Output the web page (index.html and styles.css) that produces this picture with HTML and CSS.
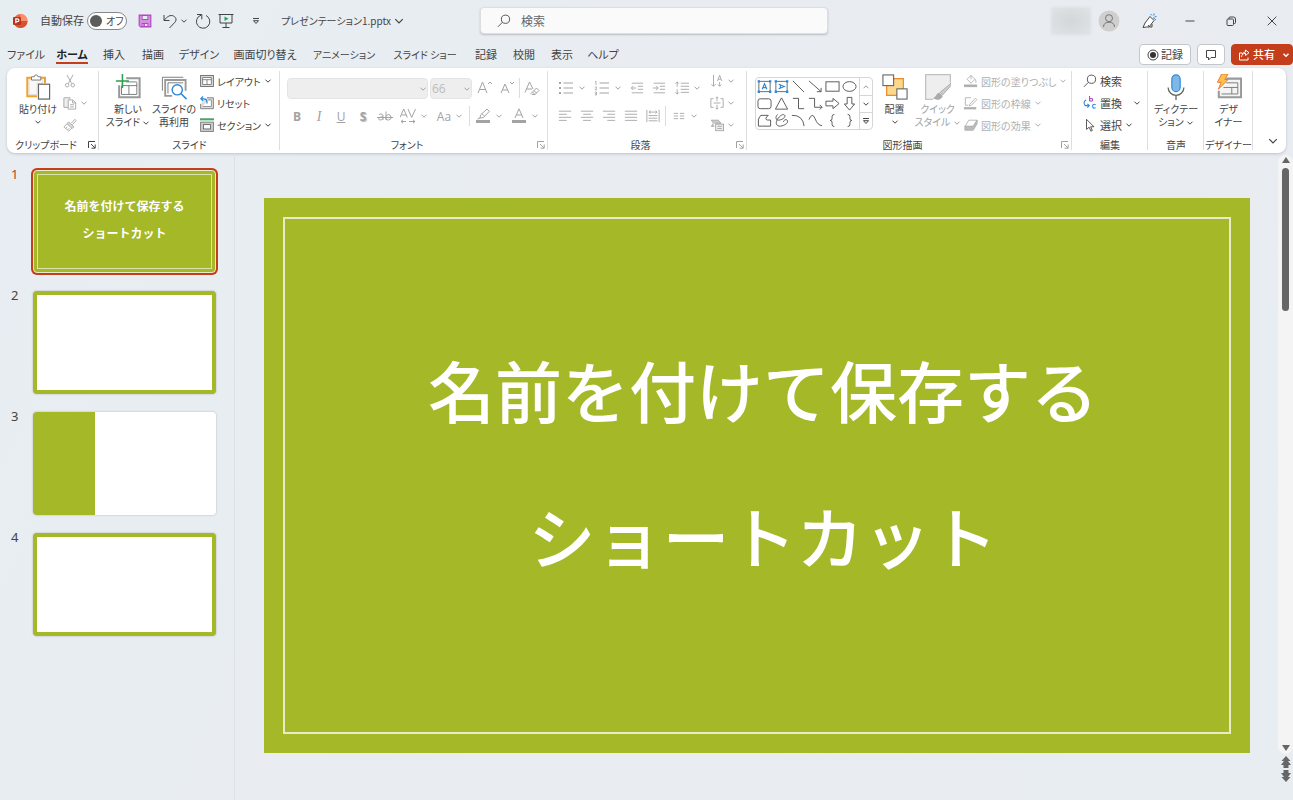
FILE: index.html
```html
<!DOCTYPE html>
<html lang="ja">
<head>
<meta charset="utf-8">
<title>プレゼンテーション1.pptx</title>
<link rel="stylesheet" href="styles.css">
</head>
<body>
<svg class="sprite" aria-hidden="true">
  <symbol id="chev" viewBox="0 0 8 8"><path d="M1.5 2.7 4 5.2 6.5 2.7"/></symbol>
  <symbol id="launch" viewBox="0 0 8 8"><path d="M.5 7V.5H7M3 3l4 4M7.2 3.5v3.7H3.5"/></symbol>
  <symbol id="logo" viewBox="0 0 16 16"><circle cx="8.500" cy="8" r="7" fill="#ed6c47" stroke="none"/><path d="M8.500 1a7 7 0 0 1 7 7h-7z" fill="#ff8f6b" stroke="none"/><path d="M1.500 8h14a7 7 0 0 1-14 0z" fill="#d35230" stroke="none"/><rect x="1" y="4" width="8" height="8" rx="1" fill="#b7351a" stroke="none"/><path d="M3.800 10.200V5.800h1.700a1.400 1.400 0 0 1 0 2.800H3.800" stroke="#fff" stroke-width="1.200"/></symbol>
  <symbol id="save" viewBox="0 0 16 16"><path d="M1.500 1.500h13v13H3l-1.500-1.500zM4.500 1.500v5h7v-5M4.500 14.500v-4h7v4M7 11v3" stroke="#b146c2" stroke-width="1.600"/><path d="M2 2h2v12H2zM12 2h2v12h-2zM4 7h8v3H4z" fill="#d58fe0" stroke="none"/></symbol>
  <symbol id="undo" viewBox="0 0 16 16"><path d="M2 2v5.500h5.500M2.300 7.200C5 3.500 8.500 1.500 11.500 3s3.300 4.500 1 6.700L7.500 15"/></symbol>
  <symbol id="redo" viewBox="0 0 16 16"><path d="M2 1.500h4.800v4.800M6 2.200a6.700 6.700 0 1 0 5 .3"/></symbol>
  <symbol id="present" viewBox="0 0 16 16"><path d="M.5 1.500h15M2 1.500v8.500h12V1.500M8 10v4.500M4.500 14.500h7"/><path d="m6.500 3.500 4 2.300-4 2.300z" fill="#21a366" stroke="none"/></symbol>
  <symbol id="overflow" viewBox="0 0 8 8"><path d="M1 1.500h6M1.500 3.700h5L4 6.500z"/></symbol>
  <symbol id="search" viewBox="0 0 16 16"><circle cx="9.700" cy="6" r="4.700"/><path d="M6.300 9.400 1 14.700"/></symbol>
  <symbol id="user" viewBox="0 0 22 22"><circle cx="11" cy="11" r="10.500" fill="#cfcfcf" stroke="none"/><circle cx="11" cy="8.200" r="3.500"/><path d="M5.500 17c0-3.300 2.300-4.800 5.500-4.800s5.500 1.500 5.500 4.800"/></symbol>
  <symbol id="pen" viewBox="0 0 16 16"><path d="M9 3.500 13 7.500 8 14H5.500L2 14.500 4 10z" fill="#fff" stroke="#444"/><path d="M7 12 8.500 14H11L11 11" stroke="#444"/><path d="M9.500 1 11 2.500M13 .5v2M15.500 3.500l-2 .5M12 4.500l3 2.500" stroke="#2b88d8"/></symbol>
  <symbol id="min" viewBox="0 0 10 10"><path d="M.5 5h9"/></symbol>
  <symbol id="restore" viewBox="0 0 10 10"><rect x="1" y="3" width="6.500" height="6.500" rx="1"/><path d="M3 3V2q0-1 1-1h3.500q2 0 2 2v3.500q0 1-1 1H7.500"/></symbol>
  <symbol id="close" viewBox="0 0 10 10"><path d="m.7.7 8.600 8.600M9.300.7.7 9.300"/></symbol>
  <symbol id="rec" viewBox="0 0 12 12"><circle cx="6" cy="6" r="5"/><circle cx="6" cy="6" r="3" fill="#333" stroke="none"/></symbol>
  <symbol id="comment" viewBox="0 0 12 12"><path d="M1.500 1.500h9v7H6L3.500 11V8.500h-2z"/></symbol>
  <symbol id="share" viewBox="0 0 12 12"><path d="M4 4H1.500v7h8.500V8.500M3.500 8c.3-2.500 1.500-3.700 4-3.700V6.500L11 3.700 7.500 1v2Q5 3 4 5"/></symbol>
  <symbol id="paste" viewBox="0 0 28 28"><path d="M7 4H2.500v20H13" stroke="#f0a030" stroke-width="2.200"/><path d="M17 4h4.500v6" stroke="#f0a030" stroke-width="2.200"/><path d="M4.500 6v16H13V10h6V6z" fill="#f8f8f8" stroke="#ddd"/><path d="M7 6.500V3h3a2 2 0 0 1 4 0h3v3.500z" fill="#fff" stroke="#777"/><rect x="14.500" y="11" width="12" height="16" fill="#fff" stroke="#666" stroke-width="1.300"/></symbol>
  <symbol id="cut" viewBox="0 0 16 16"><path d="M4.500 1 10 11M11.500 1 6 11"/><circle cx="4.800" cy="12.800" r="2"/><circle cx="11.200" cy="12.800" r="2"/></symbol>
  <symbol id="copy" viewBox="0 0 16 16"><path d="M6 13H1V2h7v2" fill="#eee"/><path d="M6 4.500h5l3.500 3V15H6z" fill="#fff"/><path d="M11 4.500V8h3.500M8 10h4.500M8 12.500h4.500"/></symbol>
  <symbol id="brush" viewBox="0 0 16 16"><path d="m9.500 6 4-4.500 1.500 1.500-4 4.500"/><path d="m6.500 4.500 6 5.500-2 2-6-5.500z" fill="#ddd"/><path d="M4.500 7 1 10l5.500 5 3.500-3.200M3 12l2-2M5 13.700l2-2"/></symbol>
  <symbol id="newslide" viewBox="0 0 28 28"><path d="M12 4.500h14.500V25h-22V12" stroke-width="2.200" stroke="#999"/><path d="M12 8.500h11.500M7 13v9h16.500v-13M7 12.500h17M15 12.500v9.500" stroke="#777"/><path d="M8 0v15M1 7.500h14" stroke="#2f9e52" stroke-width="1.700"/></symbol>
  <symbol id="reuse" viewBox="0 0 28 28"><path d="M1.500 18V3.500H24" stroke="#777"/><path d="M12 23.500H4.500v-17h22V18" stroke-width="2" stroke="#999"/><path d="M7.500 21V9.500H24" stroke="#777"/><circle cx="17.500" cy="17" r="5.500" fill="#fff" stroke="#2b88d8" stroke-width="1.500"/><path d="m21.500 21 6 6" stroke="#2b88d8" stroke-width="1.700"/></symbol>
  <symbol id="layout" viewBox="0 0 16 16"><rect x=".7" y="1.700" width="14.600" height="12.600" fill="#ddd" stroke="#666"/><path d="M3 4h10v8H3zM3 6.500h10M8 6.500V12" fill="#fff" stroke="#777"/></symbol>
  <symbol id="reset" viewBox="0 0 16 16"><path d="M8 2h7.300v12.500H.7V9" fill="#ddd" stroke="#777"/><path d="M9 4.500h4V12H3" fill="#fff" stroke="#888"/><path d="M3.500.5 1 3.200l2.700 2.500M1 3.200h3.500Q8 3.500 8 7v1.500" stroke="#2b88d8" stroke-width="1.400"/></symbol>
  <symbol id="section" viewBox="0 0 16 16"><path d="M0 1.500h16" stroke="#4aa564" stroke-width="2.400"/><rect x=".7" y="4.700" width="14.600" height="10.600" fill="#ccc" stroke="#777"/><rect x="4" y="7.500" width="8" height="5" fill="#fff" stroke="#666"/></symbol>
  <symbol id="grow" viewBox="0 0 16 16"><path d="M1 13 5.500 2 10 13M2.700 9.500h5.600M11 4l2-2 2 2"/></symbol>
  <symbol id="shrink" viewBox="0 0 16 16"><path d="M2 13 6 4l4 9M3.500 10h5M11 2l2 2 2-2"/></symbol>
  <symbol id="clear" viewBox="0 0 16 16"><path d="M1 12.500 5.500 2 9 9M2.500 9H8M12.500 8l2.500 2.500-4 4-2.500-2.500zM10 10.500l2.500 2.500M8.500 12l-1.500 1.500 1 1h3"/></symbol>
  <symbol id="strike" viewBox="0 0 16 16"><path d="M0 9.500h16M2 6.500q4-1.500 4 1.500v4M6 9c-5-.5-5 3-3 3q2 0 3-1.500M9 3.500V12M9 8.500q1-2 2.700-2T14 9t-2.500 3T9 10"/></symbol>
  <symbol id="kern" viewBox="0 0 16 16"><path d="M0 9.500 3.700 1l3.700 8.500M1.500 7h4.500M8 1l3.700 8.500L15.500 1M1 13.500h5M3 11.800 1 13.500l2 1.700M9 13.500h6M13 11.800l2 1.700-2 1.700"/></symbol>
  <symbol id="marker" viewBox="0 0 16 16"><path d="m5.500 7 6.500-6 2.300 2.300L8.500 9.500 5 10zM5 10 2.500 11M7 5.700l2.700 2.700"/><path d="M1 13.500h14" stroke-width="3"/></symbol>
  <symbol id="fcolor" viewBox="0 0 16 16"><path d="M4 10 8 .8 12 10M5.500 7h5"/><path d="M1 13.500h14" stroke-width="3"/></symbol>
  <symbol id="bullets" viewBox="0 0 16 16"><path d="M1 3h2M1 8h2M1 13h2" stroke-width="2"/><path d="M5.500 3H15M5.500 8H15M5.500 13H15"/></symbol>
  <symbol id="numbers" viewBox="0 0 16 16"><path d="M1 2l1-.7V5M.8 7h1.700v1L1 9.700h2M.8 12h1.700v3H.8M1 13.500h1.500" stroke-width=".8"/><path d="M5.500 3H15M5.500 8H15M5.500 13H15"/></symbol>
  <symbol id="outdent" viewBox="0 0 16 16"><path d="M2 2.500h13M9 6h6M9 9.500h6M2 13.500h13M7 8H1.500M4 5.500 1.500 8 4 10.500"/></symbol>
  <symbol id="indent" viewBox="0 0 16 16"><path d="M2 2.500h13M9 6h6M9 9.500h6M2 13.500h13M1 8h6M4.500 5.500 7 8l-2.500 2.500"/></symbol>
  <symbol id="spacing" viewBox="0 0 16 16"><path d="M2.500 1v5.500M.5 3l2-2 2 2M2.500 15V9.500M.5 13l2 2 2-2M6.500 2.500H16M6.500 6H16M6.500 9.500H16M6.500 13H16"/></symbol>
  <symbol id="left" viewBox="0 0 16 16"><path d="M1 2.500h14M1 6h9M1 9.500h14M1 13h9"/></symbol>
  <symbol id="center" viewBox="0 0 16 16"><path d="M1 2.500h14M3.500 6h9M1 9.500h14M3.500 13h9"/></symbol>
  <symbol id="right" viewBox="0 0 16 16"><path d="M1 2.500h14M6 6h9M1 9.500h14M6 13h9"/></symbol>
  <symbol id="justify" viewBox="0 0 16 16"><path d="M1 2.500h14M1 6h14M1 9.500h14M1 13h14"/></symbol>
  <symbol id="distribute" viewBox="0 0 16 16"><path d="M1 1v14M15 1v14M3.500 3.500h9M5 1.700 3.500 3.500 5 5.300M11 1.700l1.500 1.800L11 5.300M3 7.500h10M3 10.500h10M3 13.500h10"/></symbol>
  <symbol id="columns" viewBox="0 0 16 16"><path d="M2 5h5M2 8h5M2 11h5M9 5h5M9 8h5M9 11h5"/></symbol>
  <symbol id="direction" viewBox="0 0 16 16"><path d="M4 1v13M1.500 11.500 4 14l2.500-2.500M8.500 8l2.500-6.500L13.500 8M9.500 6h3M11 9v5M9 12l2 2 2-2"/></symbol>
  <symbol id="valign" viewBox="0 0 16 16"><path d="M4 3H1v10h3M12 3h3v10h-3M4 8h8M8 1v5M6.500 2.500 8 1l1.500 1.500M8 15v-5M6.500 13.500 8 15l1.500-1.500"/></symbol>
  <symbol id="smartart" viewBox="0 0 16 16"><path d="M1.500 2.500h8L12.500 6H5M1.500 2.500 4 6 1.500 9.500H5" fill="#ccc"/><rect x="6.500" y="7" width="9" height="7.500" fill="#eee"/><path d="M8.500 9.500h5M8.500 12h5"/></symbol>
  <symbol id="textbox" viewBox="0 0 16 16"><rect x="2" y="2.500" width="12" height="11" stroke="#666"/><path d="M.7 1.200h2.500v2.500H.7zM12.800 1.200h2.500v2.500h-2.500zM.7 12.300h2.500v2.500H.7zM12.800 12.300h2.500v2.500h-2.500z" fill="#2b88d8" stroke="none"/><path d="M5.500 11 8 5l2.500 6M6.500 9.200h3" stroke="#2b88d8" stroke-width="1.200"/></symbol>
  <symbol id="vtextbox" viewBox="0 0 16 16"><rect x="2" y="2.500" width="12" height="11" stroke="#666"/><path d="M.7 1.200h2.500v2.500H.7zM12.800 1.200h2.500v2.500h-2.500zM.7 12.300h2.500v2.500H.7zM12.800 12.300h2.500v2.500h-2.500z" fill="#2b88d8" stroke="none"/><path d="M5 5.500 11 8l-6 2.500M6.800 6.500v3" stroke="#2b88d8" stroke-width="1.200"/></symbol>
  <symbol id="line" viewBox="0 0 16 16"><path d="m2 2 12 12"/></symbol>
  <symbol id="arrow" viewBox="0 0 16 16"><path d="m1 2 13 11.500M14 9.500v4H9.500"/></symbol>
  <symbol id="rect" viewBox="0 0 16 16"><rect x="1" y="3" width="14" height="10"/></symbol>
  <symbol id="oval" viewBox="0 0 16 16"><ellipse cx="8" cy="8" rx="7" ry="5.200"/></symbol>
  <symbol id="round" viewBox="0 0 16 16"><rect x="1" y="3" width="14" height="10.500" rx="2.500"/></symbol>
  <symbol id="tri" viewBox="0 0 16 16"><path d="m8 2 6.500 12h-13z"/></symbol>
  <symbol id="elbow" viewBox="0 0 16 16"><path d="M2 2.500h6v11h6"/></symbol>
  <symbol id="elbowarrow" viewBox="0 0 16 16"><path d="M1 2.500h6V12h8M12.500 9.500 15 12l-2.500 2.500"/></symbol>
  <symbol id="rarrow" viewBox="0 0 16 16"><path d="M1 5.500h7.500V2.500L15 8l-6.500 5.500v-3H1z"/></symbol>
  <symbol id="darrow" viewBox="0 0 16 16"><path d="M5.500 1.500v7h-3L8 15l5.500-6.500h-3v-7z"/></symbol>
  <symbol id="free" viewBox="0 0 16 16"><path d="M4 2.500h8Q7.500 6.500 11 7.500h3.500V14H1.500V6.500z"/></symbol>
  <symbol id="scribble" viewBox="0 0 16 16"><path d="M4 1.500C1 4 1.500 8.500 6 7.500S13 3.500 11 2 4.500 4.500 3 8s0 6.500 4 6 8-3 7.500-5.500-4-1.500-4.500 1"/></symbol>
  <symbol id="arc" viewBox="0 0 16 16"><path d="M1 2.500q11.500-.5 13 11.500"/></symbol>
  <symbol id="curve" viewBox="0 0 16 16"><path d="M1 7Q4.500-1.500 7.500 6t7.500 7.500"/></symbol>
  <symbol id="lbrace" viewBox="0 0 16 16"><path d="M10 1.500Q7.500 1.500 7.500 4v2q0 2-2 2 2 0 2 2v2q0 2.500 2.500 2.500"/></symbol>
  <symbol id="rbrace" viewBox="0 0 16 16"><path d="M6 1.500Q8.500 1.500 8.500 4v2q0 2 2 2-2 0-2 2v2q0 2.500-2.500 2.500"/></symbol>
  <symbol id="arrange" viewBox="0 0 28 28"><path d="M5 5h18v18H5z" fill="#fbd88a" stroke="#ec8b2e" stroke-width="1.300"/><rect x="1" y="1" width="11.500" height="11.500" fill="#fff" stroke="#666" stroke-width="1.200"/><rect x="16" y="16" width="11" height="11" fill="#fff" stroke="#666" stroke-width="1.200"/></symbol>
  <symbol id="quick" viewBox="0 0 28 28"><rect x=".7" y=".7" width="26.600" height="26.600" fill="#eee" stroke="#bbb" stroke-width="1.200"/><path d="M28 9 8 28h20z" fill="#fff" stroke="none"/><path d="M28 10 16.500 19.500l2.500 3L28.500 12z" fill="#ccc" stroke="#aaa"/><path d="M15.500 20.500c-3 0-3 4.500-6 5.500 4 2.500 9 1 9-2.500z" fill="#aaa" stroke="#aaa"/></symbol>
  <symbol id="fill" viewBox="0 0 16 16"><path d="m8 1.500 4.500 4.500-4.500 4.500L3.500 6zM8 1.500V6M12.500 6q2 2 1 4"/><path d="M0 13.500h15" stroke-width="3"/></symbol>
  <symbol id="outline" viewBox="0 0 16 16"><path d="M8 2H1.500v8.500H5M6.500 9.500l6.500-7 1.700 1.700-6.500 6.500-2.200.5z"/><path d="M0 14h14" stroke-width="2.600"/></symbol>
  <symbol id="effect" viewBox="0 0 16 16"><path d="M5.500 2.500H15l-4.500 7H1z" fill="#fff"/><path d="M1 9.500h9.500l4.500-7v4l-4.500 7.500H1z" fill="#bbb"/></symbol>
  <symbol id="replace" viewBox="0 0 16 16"><path d="M7.500 0v6M7.500 3.500q3.500-1.700 3.500.7t-3.500 1.300" stroke="#b146c2" stroke-width="1.200"/><path d="M3.500 4.500Q-.5 7 2.500 11h4.500M5 9l2.200 2L5 13.200M14.500 10q-3.500-1.500-3.500 1.700t3.500 1.700" stroke="#2b88d8" stroke-width="1.200"/></symbol>
  <symbol id="select" viewBox="0 0 16 16"><path d="M4 1.500v11.500l3-2.500 2 4.500 1.700-.8-2-4.200h3.800z"/></symbol>
  <symbol id="mic" viewBox="0 0 28 28"><rect x="9.500" y="1" width="9" height="18" rx="4.500" fill="#7db8e8" stroke="#2b88d8" stroke-width="1.200"/><path d="M5.500 14.500a8.500 8.500 0 0 0 17 0M14 23v5" stroke="#666" stroke-width="1.400"/></symbol>
  <symbol id="design" viewBox="0 0 28 28"><path d="M11 5h16v20h-24V18" fill="#f4f4f4" stroke="#999" stroke-width="2.200"/><path d="M11 9.500h12.500M6 21.500h17.500v-12M8 14.500h15.500M17 14.500v7" stroke="#777"/><path d="M6 0h7L9.500 6H13L2.500 16.500 5.500 9H1.500z" fill="#fbc04d" stroke="#e8772e"/></symbol>
</svg>

<header class="titlebar">
  <div class="quick">
    <svg class="icon logo"><use href="#logo"/></svg>
    <label class="autosave"><span>自動保存</span><input type="checkbox" class="toggle-input"><span class="toggle">オフ</span></label>
    <button class="tool wide" aria-label="保存"><svg class="icon small"><use href="#save"/></svg></button>
    <button class="tool" aria-label="元に戻す"><svg class="icon"><use href="#undo"/></svg><svg class="chev"><use href="#chev"/></svg></button>
    <button class="tool" aria-label="やり直し"><svg class="icon"><use href="#redo"/></svg></button>
    <button class="tool wide" aria-label="スライドショー"><svg class="icon"><use href="#present"/></svg></button>
    <button class="tool more" aria-label="カスタマイズ"><svg class="chev"><use href="#overflow"/></svg></button>
    <button class="filename">プレゼンテーション1.pptx <svg class="chev big"><use href="#chev"/></svg></button>
  </div>
  <label class="searchbox"><svg class="icon small"><use href="#search"/></svg><input type="search" placeholder="検索" aria-label="検索"></label>
  <div class="account">
    <span class="masked"></span>
    <button class="tool" aria-label="アカウント"><svg class="avatar"><use href="#user"/></svg></button>
    <button class="tool" aria-label="ペン"><svg class="icon"><use href="#pen"/></svg></button>
    <button class="tool" aria-label="最小化"><svg class="win"><use href="#min"/></svg></button>
    <button class="tool" aria-label="元のサイズに戻す"><svg class="win"><use href="#restore"/></svg></button>
    <button class="tool" aria-label="閉じる"><svg class="win"><use href="#close"/></svg></button>
  </div>
</header>

<div class="tabrow">
  <nav class="tabs">
    <a href="#">ファイル</a><a href="#" class="active">ホーム</a><a href="#">挿入</a><a href="#">描画</a><a href="#">デザイン</a><a href="#">画面切り替え</a><a href="#" class="long">アニメーション</a><a href="#" class="long">スライド ショー</a><a href="#">記録</a><a href="#">校閲</a><a href="#">表示</a><a href="#">ヘルプ</a>
  </nav>
  <div class="actions">
    <button class="pill"><svg class="icon12"><use href="#rec"/></svg>記録</button>
    <button class="pill" aria-label="コメント"><svg class="icon12"><use href="#comment"/></svg></button>
    <button class="pill share"><svg class="icon12"><use href="#share"/></svg>共有<svg class="chev"><use href="#chev"/></svg></button>
  </div>
</div>

<section class="ribbon">
  <div class="group">
    <div class="body">
      <button class="large paste"><svg class="icon28"><use href="#paste"/></svg><span>貼り付け</span><svg class="chev"><use href="#chev"/></svg></button>
      <div class="stack dim">
        <button aria-label="切り取り"><svg class="icon"><use href="#cut"/></svg></button>
        <button aria-label="コピー"><svg class="icon"><use href="#copy"/></svg><svg class="chev"><use href="#chev"/></svg></button>
        <button aria-label="書式のコピー"><svg class="icon"><use href="#brush"/></svg></button>
      </div>
    </div>
    <footer class="has-launch">クリップボード<svg class="launch"><use href="#launch"/></svg></footer>
  </div>

  <div class="group">
    <div class="body slides">
      <button class="large"><svg class="icon28"><use href="#newslide"/></svg><span>新しい<br>スライド <svg class="chev"><use href="#chev"/></svg></span></button>
      <button class="large"><svg class="icon28"><use href="#reuse"/></svg><span>スライドの<br>再利用</span></button>
      <div class="stack">
        <button><svg class="icon"><use href="#layout"/></svg>レイアウト<svg class="chev"><use href="#chev"/></svg></button>
        <button><svg class="icon"><use href="#reset"/></svg>リセット</button>
        <button><svg class="icon"><use href="#section"/></svg>セクション<svg class="chev"><use href="#chev"/></svg></button>
      </div>
    </div>
    <footer>スライド</footer>
  </div>

  <div class="group">
    <div class="rows dim">
      <div class="row">
        <span class="combo"><select disabled aria-label="フォント名"><option></option></select><svg class="chev"><use href="#chev"/></svg></span>
        <span class="combo size"><select disabled aria-label="フォント サイズ"><option>66</option></select><svg class="chev"><use href="#chev"/></svg></span>
        <button class="cell first" aria-label="拡大"><svg class="icon"><use href="#grow"/></svg></button>
        <button class="cell" aria-label="縮小"><svg class="icon"><use href="#shrink"/></svg></button>
        <i class="sep"></i>
        <button class="cell" aria-label="書式のクリア"><svg class="icon"><use href="#clear"/></svg></button>
      </div>
      <div class="row">
        <button class="cell char"><b>B</b></button>
        <button class="cell char"><em>I</em></button>
        <button class="cell char"><u>U</u></button>
        <button class="cell char shadow"><b>S</b></button>
        <button class="cell" aria-label="取り消し線"><svg class="icon"><use href="#strike"/></svg></button>
        <button class="cell drop" aria-label="文字の間隔"><svg class="icon"><use href="#kern"/></svg><svg class="chev"><use href="#chev"/></svg></button>
        <button class="cell drop char">Aa<svg class="chev"><use href="#chev"/></svg></button>
        <i class="sep"></i>
        <button class="cell drop" aria-label="蛍光ペン"><svg class="icon"><use href="#marker"/></svg><svg class="chev"><use href="#chev"/></svg></button>
        <button class="cell drop" aria-label="フォントの色"><svg class="icon"><use href="#fcolor"/></svg><svg class="chev"><use href="#chev"/></svg></button>
      </div>
    </div>
    <footer class="has-launch">フォント<svg class="launch faint"><use href="#launch"/></svg></footer>
  </div>

  <div class="group">
    <div class="body para dim">
      <div class="rows">
        <div class="row">
          <button class="cell drop" aria-label="箇条書き"><svg class="icon"><use href="#bullets"/></svg><svg class="chev"><use href="#chev"/></svg></button>
          <button class="cell drop" aria-label="段落番号"><svg class="icon"><use href="#numbers"/></svg><svg class="chev"><use href="#chev"/></svg></button>
          <button class="cell" aria-label="インデント解除"><svg class="icon small"><use href="#outdent"/></svg></button>
          <button class="cell" aria-label="インデント"><svg class="icon small"><use href="#indent"/></svg></button>
          <button class="cell drop" aria-label="行間"><svg class="icon small"><use href="#spacing"/></svg><svg class="chev"><use href="#chev"/></svg></button>
        </div>
        <div class="row">
          <button class="cell" aria-label="左揃え"><svg class="icon small"><use href="#left"/></svg></button>
          <button class="cell" aria-label="中央揃え"><svg class="icon small"><use href="#center"/></svg></button>
          <button class="cell" aria-label="右揃え"><svg class="icon small"><use href="#right"/></svg></button>
          <button class="cell" aria-label="両端揃え"><svg class="icon small"><use href="#justify"/></svg></button>
          <button class="cell" aria-label="均等割り付け"><svg class="icon small"><use href="#distribute"/></svg></button>
          <i class="sep"></i>
          <button class="cell drop" aria-label="段組み"><svg class="icon small"><use href="#columns"/></svg><svg class="chev"><use href="#chev"/></svg></button>
        </div>
      </div>
      <div class="stack">
        <button aria-label="文字列の方向"><svg class="icon"><use href="#direction"/></svg><svg class="chev"><use href="#chev"/></svg></button>
        <button aria-label="文字の配置"><svg class="icon"><use href="#valign"/></svg><svg class="chev"><use href="#chev"/></svg></button>
        <button aria-label="SmartArt に変換"><svg class="icon"><use href="#smartart"/></svg><svg class="chev"><use href="#chev"/></svg></button>
      </div>
    </div>
    <footer class="has-launch">段落<svg class="launch faint"><use href="#launch"/></svg></footer>
  </div>

  <div class="group">
    <div class="body draw">
      <div class="gallery">
        <div class="shapes">
          <svg><use href="#textbox"/></svg><svg><use href="#vtextbox"/></svg><svg><use href="#line"/></svg><svg><use href="#arrow"/></svg><svg><use href="#rect"/></svg><svg><use href="#oval"/></svg>
          <svg><use href="#round"/></svg><svg><use href="#tri"/></svg><svg><use href="#elbow"/></svg><svg><use href="#elbowarrow"/></svg><svg><use href="#rarrow"/></svg><svg><use href="#darrow"/></svg>
          <svg><use href="#free"/></svg><svg><use href="#scribble"/></svg><svg><use href="#arc"/></svg><svg><use href="#curve"/></svg><svg><use href="#lbrace"/></svg><svg><use href="#rbrace"/></svg>
        </div>
        <div class="steps">
          <button class="up" aria-label="前の行"><svg class="chev"><use href="#chev"/></svg></button>
          <button aria-label="次の行"><svg class="chev"><use href="#chev"/></svg></button>
          <button aria-label="その他"><svg class="chev"><use href="#overflow"/></svg></button>
        </div>
      </div>
      <button class="large"><svg class="icon28"><use href="#arrange"/></svg><span>配置</span><svg class="chev"><use href="#chev"/></svg></button>
      <button class="large dim"><svg class="icon28"><use href="#quick"/></svg><span>クイック<br>スタイル <svg class="chev"><use href="#chev"/></svg></span></button>
      <div class="stack dim">
        <button><svg class="icon"><use href="#fill"/></svg>図形の塗りつぶし<svg class="chev"><use href="#chev"/></svg></button>
        <button><svg class="icon"><use href="#outline"/></svg>図形の枠線<svg class="chev"><use href="#chev"/></svg></button>
        <button><svg class="icon"><use href="#effect"/></svg>図形の効果<svg class="chev"><use href="#chev"/></svg></button>
      </div>
    </div>
    <footer class="has-launch">図形描画<svg class="launch faint"><use href="#launch"/></svg></footer>
  </div>

  <div class="group">
    <div class="body edit">
      <div class="stack">
        <button><svg class="icon"><use href="#search"/></svg>検索</button>
        <button class="spread"><svg class="icon"><use href="#replace"/></svg>置換<svg class="chev"><use href="#chev"/></svg></button>
        <button><svg class="icon"><use href="#select"/></svg>選択<svg class="chev"><use href="#chev"/></svg></button>
      </div>
    </div>
    <footer>編集</footer>
  </div>

  <div class="group">
    <div class="body middle"><button class="large"><svg class="icon28"><use href="#mic"/></svg><span>ディクテー<br>ション <svg class="chev"><use href="#chev"/></svg></span></button></div>
    <footer>音声</footer>
  </div>

  <div class="group">
    <div class="body middle"><button class="large"><svg class="icon28"><use href="#design"/></svg><span>デザ<br>イナー</span></button></div>
    <footer>デザイナー</footer>
  </div>

  <button class="collapse" aria-label="リボンを折りたたむ"><svg class="chev big"><use href="#chev"/></svg></button>
</section>

<main class="workspace">
  <ol class="thumbs">
    <li class="current"><span class="num">1</span><div class="thumb cover"><p>名前を付けて保存する<br>ショートカット</p></div></li>
    <li><span class="num">2</span><div class="thumb framed"></div></li>
    <li><span class="num">3</span><div class="thumb split"></div></li>
    <li><span class="num">4</span><div class="thumb framed"></div></li>
  </ol>
  <div class="stage">
    <article class="slide"><h1>名前を付けて保存する<br>ショートカット</h1></article>
  </div>
  <aside class="scroller">
    <div class="track">
      <svg class="arrow" viewBox="0 0 8 8"><path d="M4 1 8 7H0z"/></svg>
      <div class="handle"></div>
      <svg class="arrow end" viewBox="0 0 8 8"><path d="M4 7 8 1H0z"/></svg>
    </div>
    <button aria-label="前のスライド"><svg class="jump" viewBox="0 0 10 12"><path d="M5 0l4.500 5H7l3 4H7.500v3h-5V9H0l3-4H.5z"/></svg></button>
    <button aria-label="次のスライド"><svg class="jump" viewBox="0 0 10 12"><path d="M5 12l4.500-5H7l3-4H7.500V0h-5v3H0l3 4H.5z"/></svg></button>
  </aside>
</main>
</body>
</html>
```
FILE: styles.css
```css
* { box-sizing: border-box; }
body {
  margin: 0;
  min-height: 100vh;
  display: flex;
  flex-direction: column;
  background: linear-gradient(115deg, #e7eef2, #e9ecf1 60%, #e7edf1);
  color: #444;
  font-family: "Noto Sans CJK JP", sans-serif;
  font-size: 11px;
  line-height: 13px;
  font-feature-settings: "palt";
  overflow: hidden;
}
button {
  font: inherit;
  font-feature-settings: inherit;
  color: inherit;
  background: none;
  border: 0;
  padding: 0;
  display: flex;
  align-items: center;
  justify-content: center;
  white-space: nowrap;
}
svg { fill: none; stroke: currentColor; stroke-width: 1; flex: none; display: block; }
.sprite { position: absolute; width: 0; height: 0; }
.icon { width: 16px; height: 16px; }
.icon.small, .stack .icon { width: 14px; height: 14px; }
.icon12 { width: 12px; height: 12px; }
.icon28 { width: 26px; height: 26px; }
.chev { width: 8px; height: 8px; }
.chev.big { width: 12px; height: 12px; stroke-width: 0.8; }
.avatar { width: 22px; height: 22px; }
.win { width: 10px; height: 10px; }

.titlebar {
  display: grid;
  grid-template-columns: 480fr 348fr 465fr;
  align-items: center;
  height: 42px;
  padding-bottom: 1px;
}
.quick { display: flex; align-items: center; padding-left: 12px; }
.autosave { display: flex; align-items: center; gap: 3px; margin: 0 10px 0 12px; white-space: nowrap; }
.toggle-input { position: absolute; opacity: 0; }
.toggle {
  display: flex;
  align-items: center;
  gap: 4px;
  width: 40px;
  height: 18px;
  padding-left: 2px;
  border: 1px solid #888;
  border-radius: 9px;
  background: #fff;
  font-size: 10px;
}
.toggle::before { content: ""; width: 12px; height: 12px; border-radius: 50%; background: #5c5c5c; }
.tool { min-width: 16px; height: 24px; gap: 2px; margin-right: 7px; }
.tool.wide { margin-right: 9px; }
.tool.more { margin: 0 17px 0 5px; }
.filename { gap: 2px; font-size: 10px; }
.searchbox {
  display: flex;
  align-items: center;
  gap: 8px;
  height: 27px;
  padding-left: 16px;
  border: 1px solid #dcdfe2;
  border-radius: 4px;
  background: #fafafa;
  box-shadow: 0 1px 2px #b9bec4;
}
.searchbox input { flex: 1; min-width: 0; border: 0; background: none; outline: 0; font: inherit; font-size: 12px; color: #555; }
.searchbox input::placeholder { color: #666; }
.account { display: flex; align-items: center; justify-content: flex-end; gap: 31px; padding-right: 16px; }
.account .tool { min-width: 10px; margin: 0; }
.account .tool:nth-of-type(1) { margin-left: -24px; margin-right: -10px; }
.account .tool:nth-of-type(2) { margin-right: -3px; }
.masked { width: 40px; height: 28px; background: radial-gradient(#d3d7da, #e0e4e7); filter: blur(1px); }
.avatar { color: #777; }

.tabrow { display: flex; justify-content: space-between; height: 26px; }
.tabs {
  display: grid;
  grid-template-columns: 46px 46px 38px 40px 52px 80px 78px 84px 38px 38px 38px 44px;
  padding-left: 3px;
}
.tabs a {
  justify-self: center;
  align-self: start;
  padding: 6px 0 1px;
  color: #444;
  text-decoration: none;
  white-space: nowrap;
  border-bottom: 2px solid transparent;
}
.tabs .long { font-size: 10px; }
.tabs .active { color: #222; font-weight: 700; border-color: #c43e1c; }
.actions { display: flex; gap: 6px; padding-top: 2px; }
.pill { height: 21px; gap: 2px; padding: 0 7px; border: 1px solid #c4c7ca; border-radius: 4px; background: #fff; }
.pill.share { padding: 0 2px 0 6px; gap: 3px; background: #c43e1c; border-color: #c43e1c; color: #fff; font-weight: 500; }
.pill.share .chev { margin-left: 4px; stroke-width: 1.5; }

.ribbon {
  display: grid;
  grid-template-columns: 92px 181px 268px 199px 325px 76px 56px 49px 1fr;
  margin: 0 7px;
  padding-top: 2px;
  height: 85px;
  border-radius: 8px;
  background: #fff;
  box-shadow: 0 1px 3px #bcc2c8;
}
.group { position: relative; display: grid; grid-template-rows: 66px 1fr; }
.group::after { content: ""; position: absolute; right: 0; top: 1px; bottom: 3px; width: 1px; background: #dedede; }
.group footer { display: flex; align-items: center; justify-content: center; white-space: nowrap; font-size: 10px; }
.group .has-launch { padding-right: 14px; }
.launch { position: absolute; right: 3px; bottom: 4px; width: 8px; height: 8px; }
.faint, .dim { color: #a3a3a3; }
.body { display: flex; }
.large { flex-direction: column; justify-content: flex-start; flex: none; width: 46px; font-size: 10px; }
.large .icon28 { margin: 4px 0 2px; }
.large span .chev { display: inline-block; vertical-align: middle; }
.large > .chev { margin-top: 3px; }
.large.paste { margin: 0 2px 0 8px; }
.stack { display: grid; grid-template-rows: repeat(3, 22px); }
.stack button { justify-content: flex-start; gap: 3px; }
.spread .chev { margin-left: 8px; }
.slides { padding-left: 6px; }
.slides .stack { margin-left: 3px; font-size: 10px; }
.rows { padding: 4px 0 0 6px; }
.row { display: flex; align-items: center; height: 28px; }
.cell { width: 22px; height: 22px; flex: none; }
.cell.drop { width: 36px; gap: 4px; }
.char { font-family: "Open Sans", sans-serif; font-size: 12px; }
.char em { font-family: "Liberation Serif", serif; font-size: 14px; }
.shadow { text-shadow: 1px 1px 1px #bbb; }
.sep { width: 1px; height: 20px; margin: 0 1px; background: #ddd; }
.combo { position: relative; width: 141px; height: 21px; margin: 0 2px 0 1px; }
.combo.size { width: 42px; margin: 0; }
.combo select {
  appearance: none;
  width: 100%;
  height: 100%;
  padding: 0 1px;
  border: 1px solid #e4e4e4;
  border-radius: 4px;
  background: #eee;
  color: #bbb;
  opacity: 1;
  font: 12px "Open Sans", sans-serif;
}
.combo .chev { position: absolute; right: 1px; top: 7px; }
.cell.first { margin-left: 2px; }
.para .stack { margin-left: 4px; }
.draw { padding-left: 8px; }
.gallery { display: flex; width: 118px; height: 53px; margin: 7px 0 0; border: 1px solid #d6d6d6; border-radius: 4px; overflow: hidden; }
.shapes { flex: 1; display: grid; grid-template-columns: repeat(6, 17px); grid-template-rows: repeat(3, 17px); color: #555; }
.shapes svg { width: 17px; height: 17px; padding: 1px; }
.steps { width: 13px; display: grid; grid-template-rows: repeat(3, 17px); border-left: 1px solid #d6d6d6; }
.steps button + button { border-top: 1px solid #d6d6d6; }
.steps .up { color: #999; }
.steps .up svg { transform: rotate(180deg); }
.draw .large { width: 43px; }
.draw .stack { margin-left: 5px; color: #b0b0b0; font-size: 10px; }
.edit { padding-left: 11px; }
.middle { justify-content: center; }
.collapse { align-self: end; height: 24px; justify-self: center; margin-left: 7px; }

.workspace { flex: 1; display: flex; }
.thumbs { width: 235px; margin: 0; padding: 17px 0 0; list-style: none; border-right: 1px solid #dde1e5; font-feature-settings: normal; }
.thumbs li { display: flex; margin-bottom: 18px; }
.num { width: 33px; padding-left: 11px; font: 13px/8px "Noto Sans", sans-serif; color: #444; }
.current .num { color: #c43e1c; }
.thumb { width: 183px; aspect-ratio: 16 / 9; border-radius: 4px; background: #fff; box-shadow: 0 0 2px #aaa; }
.cover { padding: 3px; background: #a5b828; border: 1px solid #e6ebc8; box-shadow: 0 0 0 2px #c43e1c; }
.cover p { margin: 0; height: 100%; padding-top: 17px; border: 1px solid #dbe2ae; color: #fff; text-align: center; font-weight: 700; font-size: 12px; line-height: 27px; }
.framed { border: 4px solid #a5b828; }
.split { background: linear-gradient(90deg, #a5b828 34%, #fff 34%); }
.stage { flex: 1; padding: 45px 28px 0 29px; }
.slide { display: flex; aspect-ratio: 16 / 9; padding: 19px; background: #a5b828; }
.slide h1 {
  flex: 1;
  margin: 0;
  padding: 97px 0 0 12px;
  border: 2px solid #e6ebc8;
  color: #fff;
  text-align: center;
  font-size: 67px;
  line-height: 146px;
  font-weight: 500;
  font-feature-settings: normal;
  white-space: nowrap;
}
.scroller { width: 15px; padding: 2px 0 18px; display: flex; flex-direction: column; align-items: center; gap: 2px; }
.track { flex: 1; width: 15px; display: flex; flex-direction: column; align-items: center; gap: 4px; padding: 1px 0 2px; border-radius: 8px; background: #f4f4f4; }
.arrow, .jump { fill: #666; stroke: none; }
.arrow { width: 8px; height: 8px; }
.end { margin-top: auto; }
.jump { width: 10px; height: 12px; }
.handle { width: 7px; height: 143px; border-radius: 4px; background: #666; }
```
